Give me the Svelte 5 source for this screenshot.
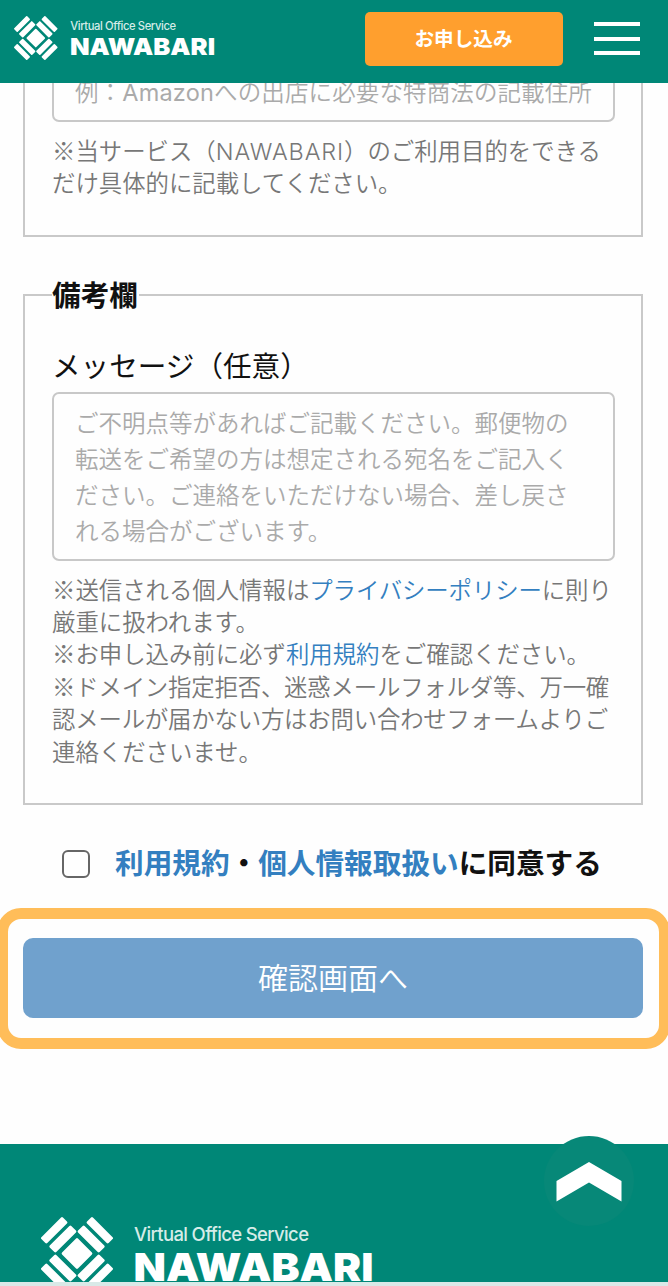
<script>
  const placeholder = [
    'ご不明点等があればご記載ください。郵便物の',
    '転送をご希望の方は想定される宛名をご記入く',
    'ださい。ご連絡をいただけない場合、差し戻さ',
    'れる場合がございます。'
  ];
  const bars = [
    'M-45-105-33-93-92-34-104-46Z',
    'M-20-80-6-66-65-7-79-21Z'
  ];
  const flips = ['1 1', '-1 1', '1 -1', '-1 -1'];
</script>

{#snippet logo()}
  <svg class="logo" viewBox="0 0 334 73" aria-label="Virtual Office Service NAWABARI">
    <g transform="translate(36 36.5) scale(.3333)" fill="#fff" stroke="#fff" stroke-width="8" stroke-linejoin="round">
      <path d="M0-42 42 0 0 42-42 0Z" />
      {#each flips as flip}
        <g transform="scale({flip})">
          {#each bars as d}<path {d} />{/each}
        </g>
      {/each}
    </g>
    <text class="tag" x="93" y="23.5" textLength="175">Virtual Office Service</text>
    <text class="name" x="92.5" y="63.7" textLength="240" lengthAdjust="spacingAndGlyphs">NAWABARI</text>
  </svg>
{/snippet}

<div class="page">
  <header>
    <div class="brand">{@render logo()}</div>
    <button class="apply">お申し込み</button>
    <div class="menu"><i></i><i></i><i></i></div>
  </header>

  <main>
    <section class="box purpose">
      <div class="field cut"><p>例：<span class="latin">Amazon</span>への出店に必要な特商法の記載住所</p></div>
      <div class="notes">
        <p>※当サービス（<span class="latin wide">NAWABARI</span>）のご利用目的をできる</p>
        <p>だけ具体的に記載してください。</p>
      </div>
    </section>

    <section class="box remarks">
      <h2>備考欄</h2>
      <div class="label">メッセージ（任意）</div>
      <div class="field area">
        {#each placeholder as line}<p>{line}</p>{/each}
      </div>
      <div class="notes">
        <p>※送信される個人情報は<a class="policy" href="#privacy">プライバシーポリシー</a>に則り</p>
        <p>厳重に扱われます。</p>
        <p>※お申し込み前に必ず<a href="#terms">利用規約</a>をご確認ください。</p>
        <p class="tight">※ドメイン指定拒否、迷惑メールフォルダ等、万一確</p>
        <p class="tight">認メールが届かない方はお問い合わせフォームよりご</p>
        <p>連絡くださいませ。</p>
      </div>
    </section>

    <div class="agree">
      <span class="check"></span>
      <p><a href="#terms">利用規約</a>・<a href="#privacy">個人情報取扱い</a>に同意する</p>
    </div>

    <div class="highlight"><button class="confirm">確認画面へ</button></div>
  </main>

  <footer>
    <div class="brand">{@render logo()}</div>
    <a class="top" href="#top" aria-label="ページの先頭へ">
      <svg viewBox="0 0 90 90"><path d="M12.5 45 45 26 77.500 45V65.500L45 46.500 12.500 65.500Z" fill="#fff" /></svg>
    </a>
  </footer>
</div>

<style>
  :global(body) { background: #fefefe; }
  * { box-sizing: border-box; }
  p, h2 { margin: 0; }
  a { color: #337fc0; text-decoration: none; }
  button { border: 0; padding: 0; font-family: inherit; color: #fff; }
  .page {
    width: 668px; height: 1286px; overflow: hidden;
    display: flex; flex-direction: column;
    background: #fefefe; color: #111;
    font-family: "Noto Sans CJK JP", sans-serif;
    white-space: nowrap;
  }
  header {
    height: 83px; flex: none; background: #008777;
    display: flex; align-items: flex-start; padding: 0 28px 0 14px;
  }
  .logo { display: block; width: 100%; overflow: visible; }
  .tag { font: 500 18.5px Inter, sans-serif; fill: #d5ece8; }
  .name { font: 900 39px Inter, sans-serif; fill: #fff; }
  header .brand { width: 202px; margin-top: 16px; }
  .apply {
    width: 198px; height: 54px; margin: 12px 0 0 149px; border-radius: 5px;
    background: #ff9f2e; font-size: 19.6px; font-weight: 700; line-height: 52px; padding: 0 1px 3px 0;
  }
  .menu { width: 46px; margin: 22px 0 0 auto; display: flex; flex-direction: column; gap: 10.500px; }
  .menu i { height: 4px; background: #fff; }

  main { flex: none; height: 1061px; padding: 0 25px 0 23px; }
  .box { border: 2px solid #c9c9c9; padding: 0 27px; }
  .purpose { height: 154px; border-top: 0; }
  .field { width: 563px; border: 2px solid #c8c8c8; border-radius: 7px; color: #aaa; font-size: 23.500px; font-weight: 350; }
  .cut { height: 39px; border-top: 0; border-radius: 0 0 7px 7px; overflow: hidden; padding-left: 21px; }
  .cut p { line-height: 36px; margin-top: -10px; letter-spacing: .12px; }
  .latin { font-family: Inter, sans-serif; font-weight: 400; line-height: 1; letter-spacing: .2px; }
  .wide { font-weight: 350; letter-spacing: .9px; }
  .notes { font-size: 23.400px; line-height: 32.400px; color: #777; font-weight: 350; }
  .tight { letter-spacing: -.18px; }
  .policy { letter-spacing: -.1px; }
  .purpose .notes { margin-top: 12px; }
  .remarks { margin-top: 59px; height: 511px; }
  .purpose + .remarks { margin-top: 57px; }
  h2 { width: 87px; margin-top: -23px; background: #fefefe; font-size: 28.700px; line-height: 42px; }
  .label { margin-top: 29px; font-size: 28.600px; line-height: 42px; }
  .area { height: 169px; margin-top: 6px; padding: 10px 0 0 21px; }
  .area p { line-height: 36px; }
  .remarks .notes { margin-top: 11.500px; }

  .agree { height: 60px; margin-top: 29px; padding-left: 39px; display: flex; align-items: center; gap: 25px; font-size: 28.650px; font-weight: 700; }
  .check { width: 28px; height: 28px; border: 2px solid #666; border-radius: 6px; }
  .agree p { line-height: 42px; padding-bottom: 4px; }
  .highlight {
    width: 673px; height: 141px; margin: 14px 0 0 -26px; padding: 19px 15px 0;
    border: 11px solid #ffbd59; border-radius: 24px;
  }
  .confirm { display: block; width: 620px; height: 80px; border-radius: 10px; background: #70a1cd; font-size: 30px; font-weight: 350; line-height: 74px; padding-bottom: 5px; }

  footer { position: relative; height: 138px; flex: none; background: #008777; padding: 73px 0 0 41px; }
  footer .brand { width: 334px; height: 65px; overflow: hidden; }
  .page::after { content: ""; height: 4px; flex: none; background: #d9e9e7; }
  .top { position: absolute; left: 544px; top: -8px; width: 90px; height: 90px; border-radius: 50%; background: #078878; }
  .top svg { display: block; }
</style>
